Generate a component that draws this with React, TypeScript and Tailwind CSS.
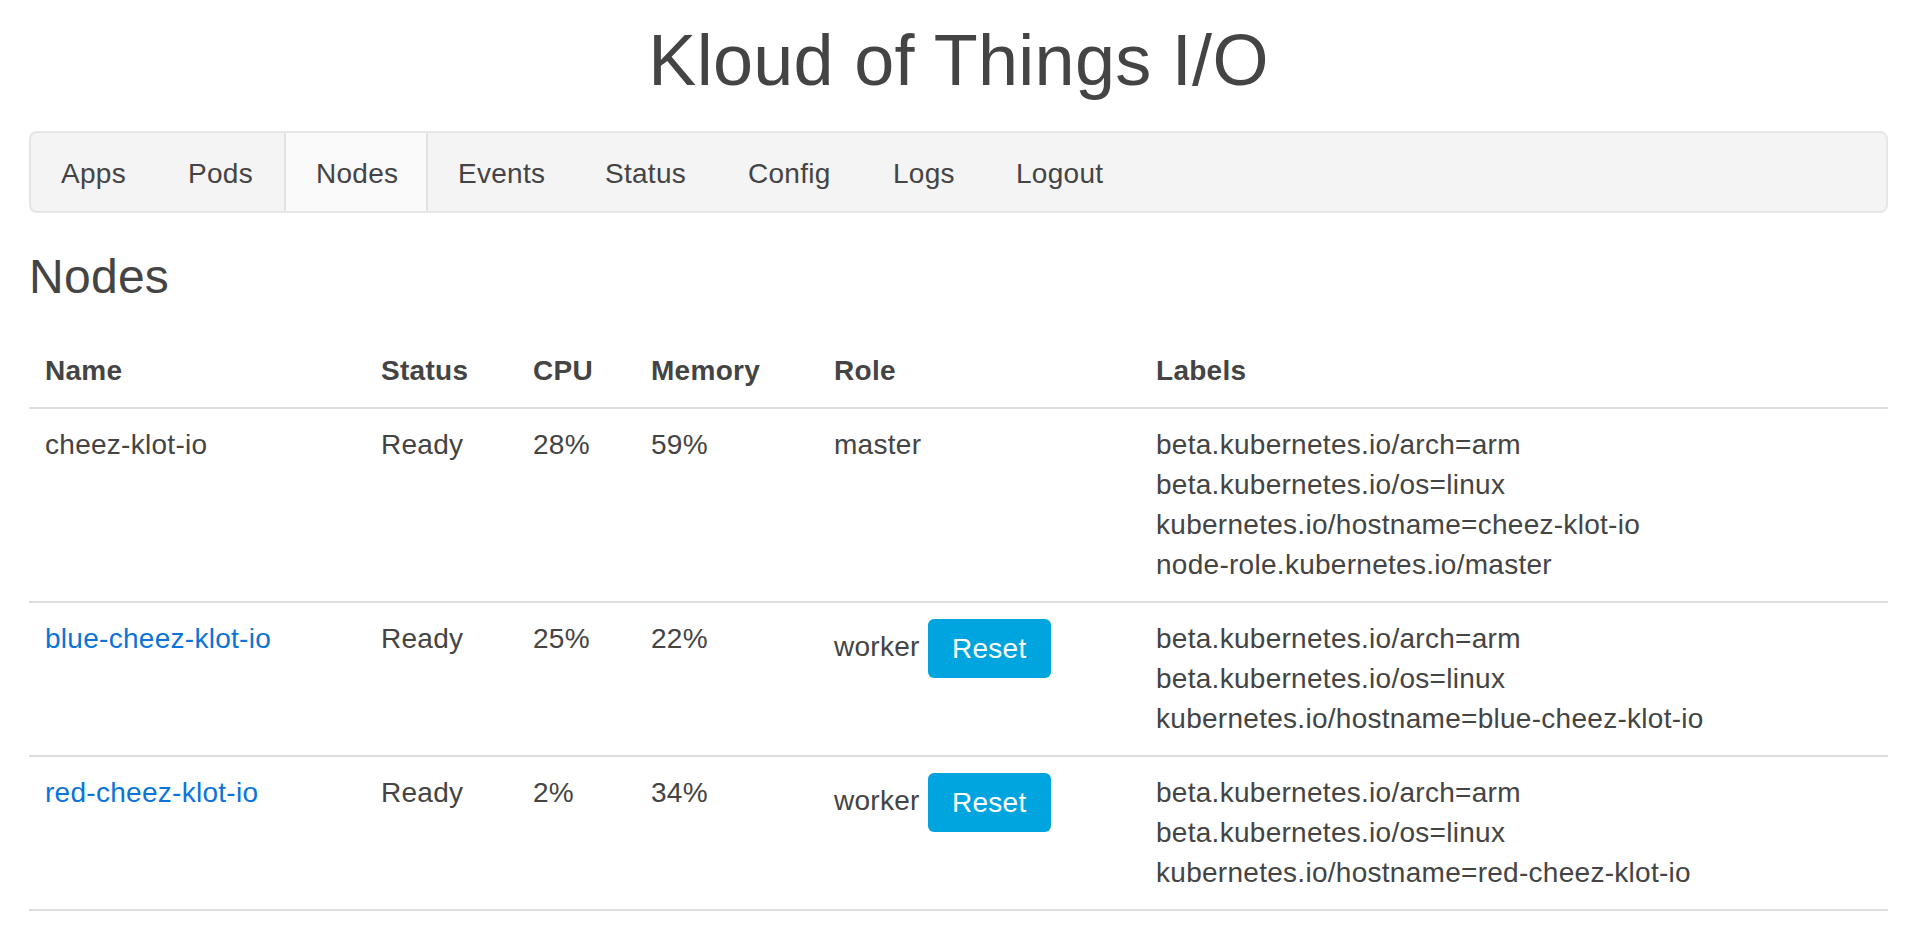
const navItems = [
  { label: 'Apps', width: 'w-[127px]' },
  { label: 'Pods', width: 'w-[126px]' },
  { label: 'Nodes', width: 'w-[144px]', active: true },
  { label: 'Events', width: 'w-[147px]' },
  { label: 'Status', width: 'w-[143px]' },
  { label: 'Config', width: 'w-[145px]' },
  { label: 'Logs', width: 'w-[123px]' },
  { label: 'Logout', width: 'w-auto' },
];

type Node = {
  name: string;
  link: boolean;
  status: string;
  cpu: string;
  memory: string;
  role: string;
  labels: string[];
};

const nodes: Node[] = [
  {
    name: 'cheez-klot-io',
    link: false,
    status: 'Ready',
    cpu: '28%',
    memory: '59%',
    role: 'master',
    labels: [
      'beta.kubernetes.io/arch=arm',
      'beta.kubernetes.io/os=linux',
      'kubernetes.io/hostname=cheez-klot-io',
      'node-role.kubernetes.io/master',
    ],
  },
  {
    name: 'blue-cheez-klot-io',
    link: true,
    status: 'Ready',
    cpu: '25%',
    memory: '22%',
    role: 'worker',
    labels: [
      'beta.kubernetes.io/arch=arm',
      'beta.kubernetes.io/os=linux',
      'kubernetes.io/hostname=blue-cheez-klot-io',
    ],
  },
  {
    name: 'red-cheez-klot-io',
    link: true,
    status: 'Ready',
    cpu: '2%',
    memory: '34%',
    role: 'worker',
    labels: [
      'beta.kubernetes.io/arch=arm',
      'beta.kubernetes.io/os=linux',
      'kubernetes.io/hostname=red-cheez-klot-io',
    ],
  },
];

const cell = 'px-4 py-4 align-top text-left';

export default function App() {
  return (
    <div className="min-h-screen bg-white pl-[29px] pr-[38px] font-['Liberation_Sans',Arial,sans-serif] text-[28px] leading-[40px] tracking-[0.01em] text-[#444444]">
      <h1 className="mt-[20px] text-center text-[72px] leading-[80px] font-normal">
        Kloud of Things I/O
      </h1>

      <nav className="mt-[31px] flex h-[82px] rounded-[8px] border-2 border-[#e6e6e6] bg-[#f4f4f4]">
        {navItems.map((item) => (
          <a
            key={item.label}
            href="#"
            className={`flex items-center pt-[4px] pl-[30px] pr-[30px] ${item.width} ${
              item.active ? 'border-x-2 border-[#e2e2e2] bg-[#fafafa]' : ''
            }`}
          >
            {item.label}
          </a>
        ))}
      </nav>

      <h3 className="mt-[37px] text-[48px] leading-[53px] font-normal">Nodes</h3>

      <table className="mt-[32px] w-full table-fixed border-collapse">
        <thead>
          <tr className="border-b-2 border-[#dddddd] font-bold">
            <th className={`${cell} w-[336px]`}>Name</th>
            <th className={`${cell} w-[152px]`}>Status</th>
            <th className={`${cell} w-[118px]`}>CPU</th>
            <th className={`${cell} w-[183px]`}>Memory</th>
            <th className={`${cell} w-[322px]`}>Role</th>
            <th className={cell}>Labels</th>
          </tr>
        </thead>
        <tbody>
          {nodes.map((node) => (
            <tr key={node.name} className="border-b-2 border-[#dddddd]">
              <td className={cell}>
                {node.link ? (
                  <a href="#" className="text-[#0a74d8]">
                    {node.name}
                  </a>
                ) : (
                  node.name
                )}
              </td>
              <td className={cell}>{node.status}</td>
              <td className={cell}>{node.cpu}</td>
              <td className={cell}>{node.memory}</td>
              <td className={cell}>
                {node.role}
                {node.role === 'worker' && (
                  <>
                    {' '}
                    <button className="inline-block h-[59px] w-[123px] rounded-[6px] bg-[#00a5e0] text-center align-middle text-[28px] leading-[59px] text-white">
                      Reset
                    </button>
                  </>
                )}
              </td>
              <td className={cell}>
                {node.labels.map((label) => (
                  <div key={label}>{label}</div>
                ))}
              </td>
            </tr>
          ))}
        </tbody>
      </table>
    </div>
  );
}
